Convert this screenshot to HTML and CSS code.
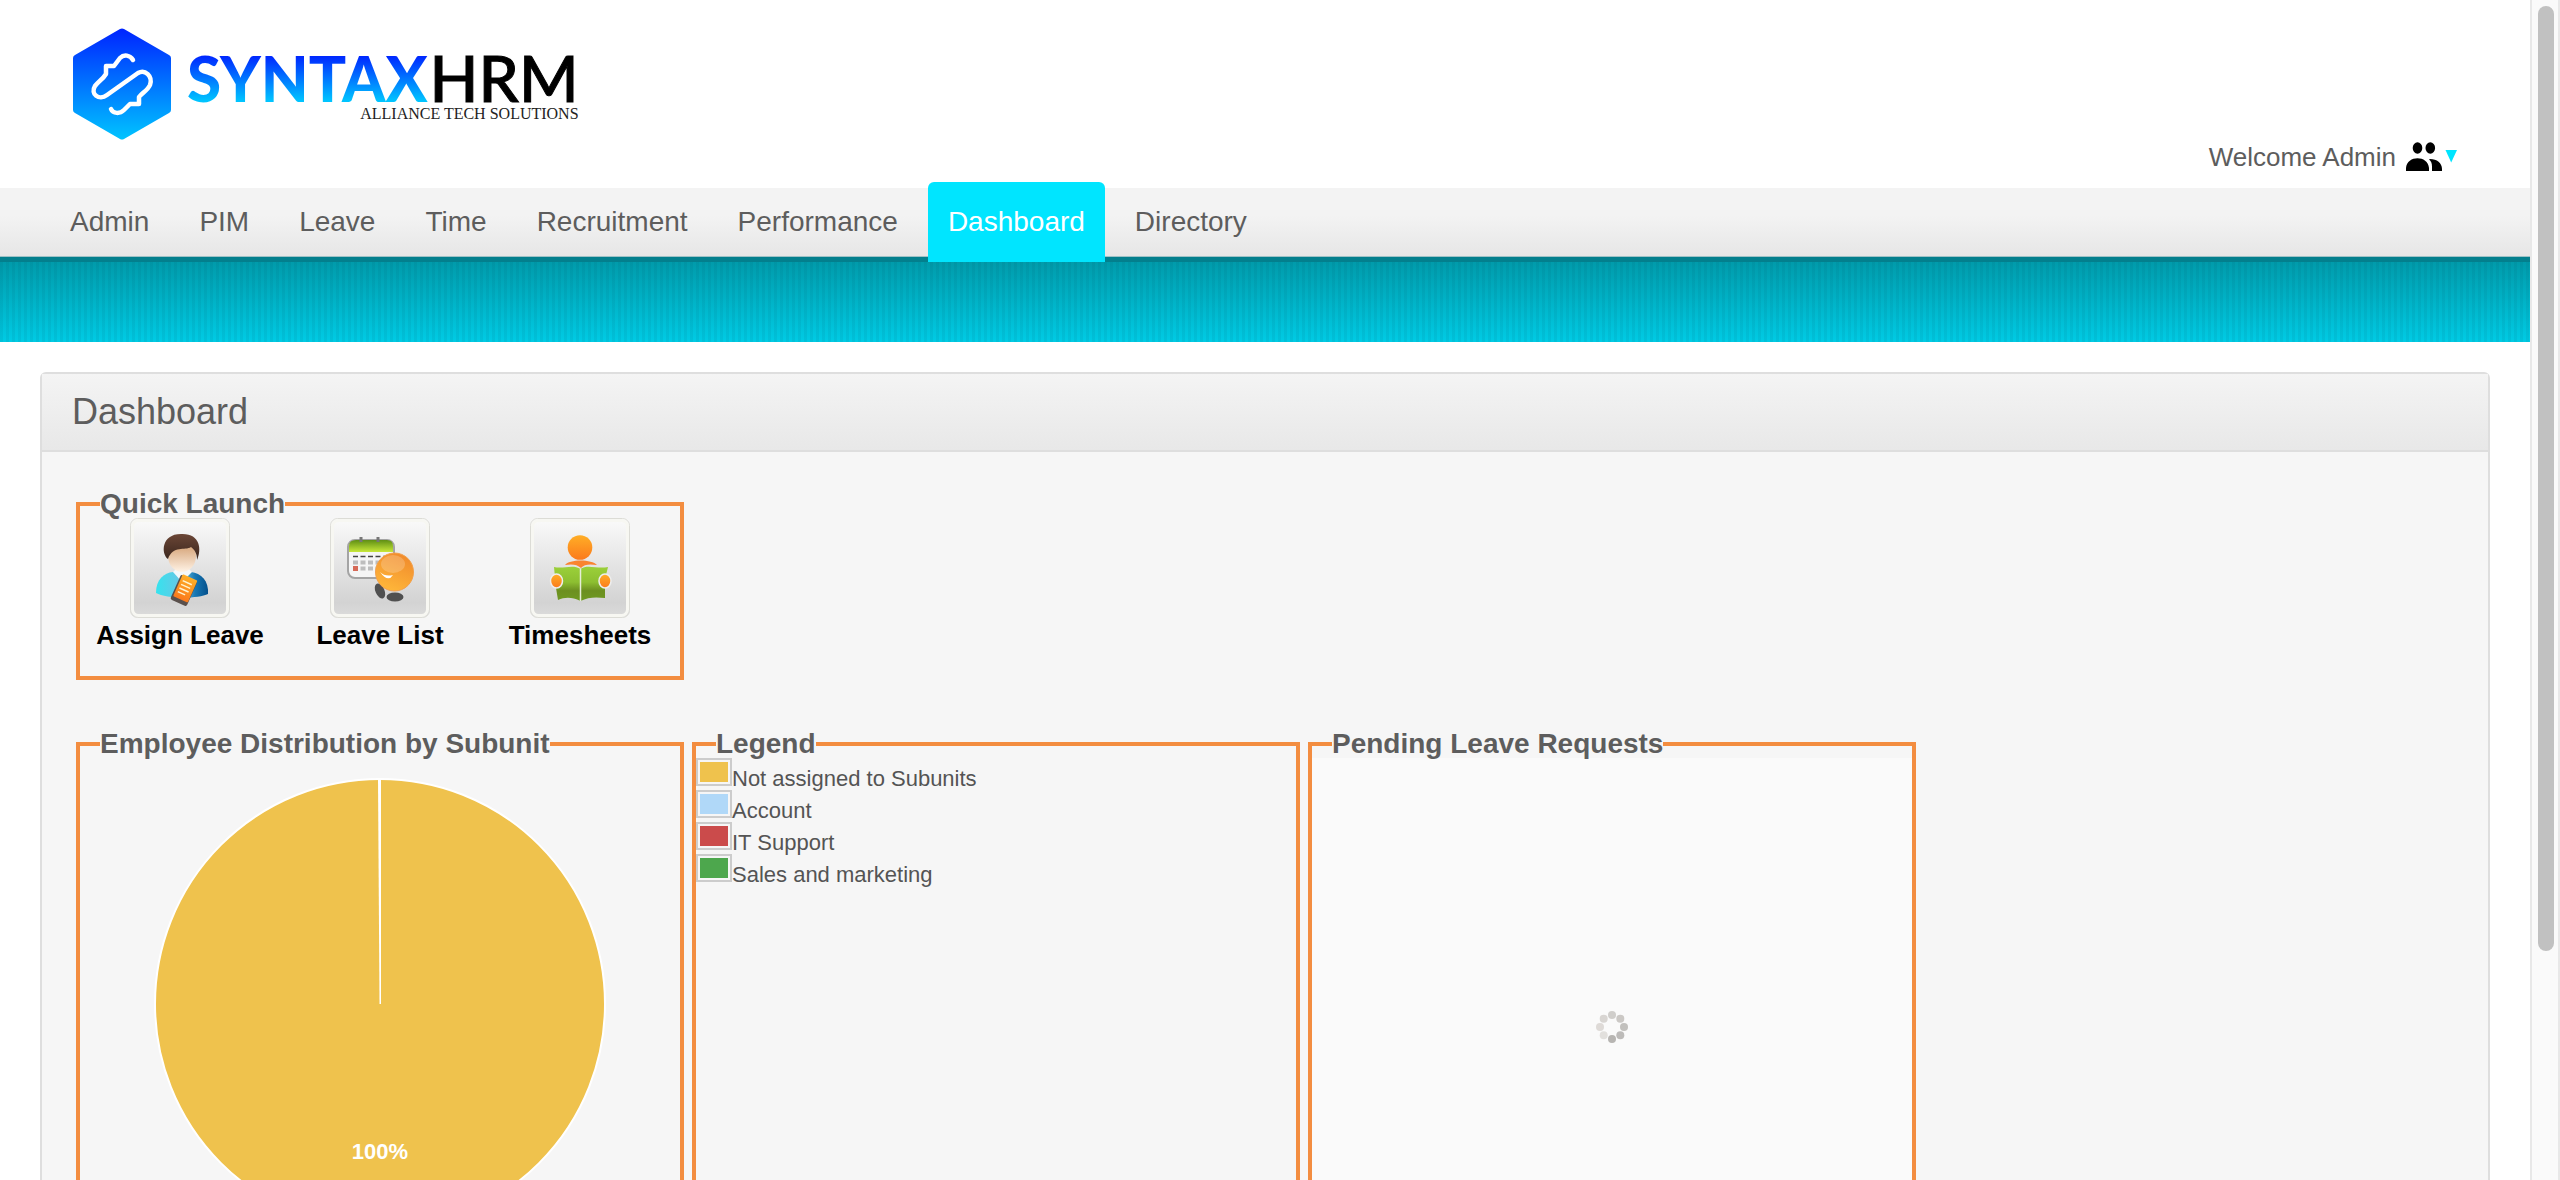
FILE: index.html
```html
<!DOCTYPE html>
<html lang="en">
<head>
<meta charset="utf-8">
<title>Dashboard - SyntaxHRM</title>
<meta name="viewport" content="width=device-width, initial-scale=1">
<link rel="stylesheet" href="styles.css">
</head>
<body>
<div class="page">
  <header class="header">
    <a class="brand" href="#">
      <svg class="brand-mark" viewBox="0 0 98 112" aria-hidden="true">
        <defs><linearGradient id="brandFill" x1="0" y1="0" x2="0" y2="1"><stop offset="0" stop-color="#0024ff"/><stop offset="1" stop-color="#00c4ff"/></linearGradient></defs>
        <path fill="url(#brandFill)" d="M47 1Q49 0 51 1L96 27Q98 28 98 30V82Q98 84 96 85L51 111Q49 112 47 111L2 85Q0 84 0 82V30Q0 28 2 27Z"/>
        <g fill="none" stroke="#fff" stroke-width="4.500" stroke-linecap="round" stroke-linejoin="round">
          <path d="M60 32C57 27 51 26 47 30L41 38H33V46C30 51 26 53 22 58C17 66 26 73 34 67L65 45C72 41 80 48 77 57C75 62 69 65 66 69V76H57L51 82C47 86 40 86 38 81"/>
        </g>
      </svg>
      <span class="brand-text">
        <span class="brand-name"><span class="brand-syntax">SYNTAX</span><span class="brand-hrm">HRM</span></span>
        <span class="brand-tagline">ALLIANCE TECH SOLUTIONS</span>
      </span>
    </a>
    <a class="user" href="#">
      <span>Welcome Admin</span>
      <svg class="user-icon" viewBox="0 0 52 30" aria-hidden="true">
        <ellipse cx="11.500" cy="6" rx="4.800" ry="5.800"/><ellipse cx="24.300" cy="6" rx="4.800" ry="5.800"/>
        <path d="M0 29V26C1 13 22 13 23 26V29ZM24 17C31 17 36 21 36 27V29H26V25C26 21 25 19 23 17.500Z"/>
        <path fill="#00e5ff" d="M39.500 8H51L45.200 20.500Z"/>
      </svg>
    </a>
  </header>

  <nav class="menu" aria-label="Main">
    <a class="menu-item" href="#">Admin</a>
    <a class="menu-item" href="#">PIM</a>
    <a class="menu-item" href="#">Leave</a>
    <a class="menu-item" href="#">Time</a>
    <a class="menu-item" href="#">Recruitment</a>
    <a class="menu-item" href="#">Performance</a>
    <a class="menu-item menu-item-current" href="#" aria-current="page">Dashboard</a>
    <a class="menu-item" href="#">Directory</a>
  </nav>
  <div class="ribbon"></div>

  <main class="box">
    <h1 class="box-title">Dashboard</h1>
    <div class="box-body">
      <fieldset class="panel panel-launch">
        <legend>Quick Launch</legend>
        <div class="launch-list">
          <a class="launch" href="#">
            <svg class="launch-icon" viewBox="0 0 100 100" aria-hidden="true">
              <defs>
                <linearGradient id="tile" x1="0" y1="0" x2="0" y2="1"><stop offset="0" stop-color="#fafafa"/><stop offset="0.850" stop-color="#d3d3d3"/><stop offset="1" stop-color="#dcdcdc"/></linearGradient>
                <linearGradient id="hair" x1="0" y1="0" x2="0" y2="1"><stop offset="0" stop-color="#6b4636"/><stop offset="1" stop-color="#3a261d"/></linearGradient>
                <linearGradient id="skin" x1="0" y1="0" x2="0" y2="1"><stop offset="0.300" stop-color="#dcb089"/><stop offset="1" stop-color="#fff3e6"/></linearGradient>
                <linearGradient id="shirt"><stop offset="0" stop-color="#35e3ee"/><stop offset="0.500" stop-color="#6cc4e4"/><stop offset="0.750" stop-color="#1878b4"/><stop offset="1" stop-color="#04508c"/></linearGradient>
                <linearGradient id="orange" x1="0" y1="0" x2="0" y2="1"><stop offset="0" stop-color="#ffae26"/><stop offset="1" stop-color="#fb7a1c"/></linearGradient>
                <linearGradient id="ball" x1="0.700" y1="0" x2="0.300" y2="1"><stop offset="0" stop-color="#f08a2c"/><stop offset="1" stop-color="#ffb83a"/></linearGradient>
                <linearGradient id="green" x1="0" y1="0" x2="0" y2="1"><stop offset="0" stop-color="#9bd03a"/><stop offset="0.450" stop-color="#8dbf31"/><stop offset="0.700" stop-color="#6c8f20"/><stop offset="1" stop-color="#6f9a22"/></linearGradient>
                <linearGradient id="calTop" x1="0" y1="0" x2="0" y2="1"><stop offset="0" stop-color="#5f8f14"/><stop offset="1" stop-color="#c8e83a"/></linearGradient>
              </defs>
              <rect x="0.500" y="0.500" width="99" height="99" rx="7" fill="url(#tile)" stroke="#dcdcd6" stroke-width="1"/>
              <rect x="2.500" y="2.500" width="95" height="95" rx="6" fill="none" stroke="#f7f7f2" stroke-width="3"/>
              <path fill="url(#shirt)" d="M26 75C26 61 34 55 43 54H61C71 55 79 63 78 76C68 81 36 81 26 75Z"/>
              <path fill="#f4f8fa" d="M43 54L52 64L62 54L58 50H47Z"/>
              <ellipse cx="52" cy="38" rx="14" ry="16" fill="url(#skin)"/>
              <path fill="url(#hair)" d="M38 41C31 36 31 16 51 16C70 15 72 31 67 42C67 36 65 32 61 29C55 33 43 27 38 41Z"/>
              <g transform="rotate(24 54 72)"><rect x="45" y="59" width="18" height="27" rx="2" fill="#5a504c"/><rect x="46.500" y="58" width="16" height="24" rx="1" fill="url(#orange)"/><path stroke="#fff3d0" stroke-width="1.500" d="M49 64H59M49 68H59M49 72H59M49 76H57"/></g>
            </svg>
            <span>Assign Leave</span>
          </a>
          <a class="launch" href="#">
            <svg class="launch-icon" viewBox="0 0 100 100" aria-hidden="true">
              <rect x="0.500" y="0.500" width="99" height="99" rx="7" fill="url(#tile)" stroke="#dcdcd6" stroke-width="1"/>
              <rect x="2.500" y="2.500" width="95" height="95" rx="6" fill="none" stroke="#f7f7f2" stroke-width="3"/>
              <rect x="18" y="22" width="46" height="38" rx="7" fill="#f5f5f5" stroke="#a4a4a4" stroke-width="2"/>
              <path fill="url(#calTop)" d="M19 34V28Q19 22 26 22H57Q63 22 63 28V34Z"/>
              <path stroke="#777" stroke-width="3" d="M31 19V24M48 19V24"/>
              <path stroke="#444" stroke-width="1.500" stroke-dasharray="5 2.500" d="M23 38.500H60"/>
              <path stroke="#bdbdbd" stroke-width="4" stroke-dasharray="5 2.500" d="M23 44.500H60M23 50.500H56"/>
              <rect x="23" y="48" width="5" height="5" fill="#d66a58"/>
              <ellipse cx="50" cy="73" rx="4.500" ry="8" fill="#505050" transform="rotate(-24 50 73)"/>
              <ellipse cx="65" cy="79" rx="8.500" ry="4.500" fill="#505050"/>
              <circle cx="64.500" cy="54" r="19" fill="url(#ball)" stroke="#f3a04a" stroke-width="1"/>
              <ellipse cx="63" cy="46" rx="12" ry="9" fill="#fff" opacity="0.200"/>
              <path fill="#fff" d="M50 54Q55 59 63 57Q58 65 50 54Z"/>
            </svg>
            <span>Leave List</span>
          </a>
          <a class="launch" href="#">
            <svg class="launch-icon" viewBox="0 0 100 100" aria-hidden="true">
              <rect x="0.500" y="0.500" width="99" height="99" rx="7" fill="url(#tile)" stroke="#dcdcd6" stroke-width="1"/>
              <rect x="2.500" y="2.500" width="95" height="95" rx="6" fill="none" stroke="#f7f7f2" stroke-width="3"/>
              <circle cx="50" cy="29.500" r="12.300" fill="url(#orange)"/>
              <path fill="#f98430" d="M35 47C39 41 62 41 67 47C60 46 54 46 51 50C47 46 41 46 35 47Z"/>
              <path fill="url(#green)" d="M24 49C34 51 43 46 50.500 51C57 46 67 51 78 49L75 61V80C66 79 58 79 50.500 83C42 79 35 79 28 82L26 70Z"/>
              <path stroke="#e6edd8" stroke-width="1.500" d="M50.500 51V83"/>
              <ellipse cx="26.500" cy="63" rx="6" ry="7" fill="url(#orange)" stroke="#eee" stroke-width="1.500"/>
              <ellipse cx="75" cy="63" rx="6" ry="7" fill="url(#orange)" stroke="#eee" stroke-width="1.500"/>
            </svg>
            <span>Timesheets</span>
          </a>
        </div>
      </fieldset>

      <div class="panel-row">
        <fieldset class="panel panel-tall">
          <legend>Employee Distribution by Subunit</legend>
          <div class="chart">
            <svg class="pie" viewBox="0 0 452 452" role="img" aria-label="Not assigned to Subunits 100%">
              <circle cx="226" cy="226" r="225" fill="#efc24d" stroke="#fff" stroke-width="2"/>
              <path fill="#fff" d="M224 1H227L227 226H225.500Z"/>
              <text class="pie-label" x="226" y="381" text-anchor="middle">100%</text>
            </svg>
          </div>
        </fieldset>
        <fieldset class="panel panel-tall">
          <legend>Legend</legend>
          <ul class="key">
            <li><span class="swatch"><span class="swatch-fill fill-yellow"></span></span>Not assigned to Subunits</li>
            <li><span class="swatch"><span class="swatch-fill fill-blue"></span></span>Account</li>
            <li><span class="swatch"><span class="swatch-fill fill-red"></span></span>IT Support</li>
            <li><span class="swatch"><span class="swatch-fill fill-green"></span></span>Sales and marketing</li>
          </ul>
        </fieldset>
        <fieldset class="panel panel-tall">
          <legend>Pending Leave Requests</legend>
          <div class="loading">
            <svg class="spinner" viewBox="0 0 32 32" role="img" aria-label="Loading">
              <circle cx="16" cy="4" r="4" fill="#d0cecb"/><circle cx="24.300" cy="7.700" r="4" fill="#cbc8c5"/><circle cx="28" cy="16" r="4" fill="#c2c0bd"/><circle cx="24.300" cy="24.300" r="4" fill="#bdbbb9"/><circle cx="16" cy="28" r="4" fill="#b7b5b2"/><circle cx="7.700" cy="24.300" r="4" fill="#e2e0dd"/><circle cx="4" cy="16" r="4" fill="#dedad7"/><circle cx="7.700" cy="7.700" r="4" fill="#d8d5d2"/>
            </svg>
          </div>
        </fieldset>
      </div>
    </div>
  </main>
</div>
<div class="scrollbar" aria-hidden="true"><div class="scrollbar-thumb"></div></div>
</body>
</html>
```
FILE: styles.css
```css
* {
  box-sizing: border-box;
}

body {
  display: flex;
  height: 100vh;
  margin: 0;
  overflow: hidden;
  background: #fff;
  color: #5d5d5d;
  font-family: "Liberation Sans", Arial, sans-serif;
}

a {
  color: inherit;
  text-decoration: none;
}

.page {
  flex: 1;
  min-width: 0;
}

/* Header */
.header {
  display: flex;
  align-items: flex-start;
  justify-content: space-between;
  height: 188px;
  padding: 28px 72px 0 73px;
}

.brand {
  display: flex;
  gap: 16px;
}

.brand-mark {
  width: 98px;
  height: 112px;
}

.brand-text {
  display: flex;
  flex-direction: column;
  padding-top: 12px;
}

.brand-name {
  display: flex;
  align-items: baseline;
  gap: 2px;
  font: 400 64px/76px Lato, sans-serif;
}

.brand-syntax {
  background: linear-gradient(#0024ff 20%, #00c4ff 80%);
  background-clip: text;
  color: transparent;
  font-size: 62px;
  font-weight: 900;
}

.brand-hrm {
  color: #000;
  font-weight: 500;
  -webkit-text-stroke: 1px #000;
}

.brand-tagline {
  margin-top: -12px;
  color: #222;
  font: 400 16px/20px "Liberation Serif", serif;
  text-align: right;
}

.user {
  display: flex;
  gap: 10px;
  padding-top: 114px;
  font-size: 26px;
  line-height: 30px;
}

.user-icon {
  width: 52px;
  height: 30px;
  fill: #000;
}

/* Main menu */
.menu {
  display: flex;
  align-items: flex-end;
  gap: 10px;
  height: 74px;
  padding-left: 50px;
  border-bottom: 5px solid #037f8d;
  background: linear-gradient(#f3f3f3 40%, #e6e6e6);
  box-shadow: inset 0 -1px #9fc2c6;
}

.menu-item {
  height: 80px;
  margin-bottom: -5px;
  padding: 0 20px;
  border-radius: 6px 6px 0 0;
  font-size: 28px;
  line-height: 80px;
}

.menu-item-current {
  background: #00e5ff;
  color: #fff;
}

.ribbon {
  height: 80px;
  background:
    repeating-linear-gradient(90deg, rgba(0, 60, 80, 0.070) 0 3px, transparent 3px 6px),
    linear-gradient(#009bab, #00cbe4);
}

/* Content box */
.box {
  margin: 30px 40px;
  border: 2px solid #dedede;
  border-radius: 6px;
  background: #f6f6f6;
}

.box-title {
  margin: 0;
  padding: 0 30px;
  border-bottom: 2px solid #dedede;
  background: linear-gradient(#f4f4f4, #e8e8e8);
  font-size: 36px;
  font-weight: 400;
  line-height: 76px;
}

.box-body {
  display: flex;
  flex-direction: column;
  gap: 50px;
  padding: 38px 34px;
}

.panel {
  width: 608px;
  min-width: 0;
  margin: 0;
  padding: 0;
  border: 4px solid #f38d40;
}

.panel legend {
  margin-left: 20px;
  padding: 0;
  font-size: 28px;
  font-weight: 700;
  line-height: 28px;
}

.panel-launch {
  height: 190px;
}

.panel-row {
  display: flex;
  gap: 8px;
}

.panel-tall {
  height: 570px;
}

.launch-list {
  display: flex;
}

.launch {
  display: flex;
  flex: 1;
  flex-direction: column;
  align-items: center;
  color: #000;
  font-size: 26px;
  font-weight: 700;
  line-height: 34px;
}

.launch-icon {
  width: 100px;
  height: 100px;
}

.chart {
  display: flex;
  justify-content: center;
  padding-top: 20px;
}

.pie {
  width: 452px;
  height: 452px;
}

.pie-label {
  fill: #fff;
  font-size: 22px;
  font-weight: 700;
}

.key {
  display: flex;
  flex-direction: column;
  gap: 4px;
  margin: 0;
  padding: 0;
  color: #545454;
  font-size: 22px;
  list-style: none;
}

.key li {
  display: flex;
  align-items: flex-end;
  height: 28px;
  line-height: 14px;
}

.swatch {
  width: 36px;
  height: 28px;
  padding: 2px;
  border: 2px solid #ccc;
}

.swatch-fill {
  display: block;
  height: 20px;
}

.fill-yellow { background: #efc24d; }
.fill-blue { background: #b0d8f8; }
.fill-red { background: #cb4b4b; }
.fill-green { background: #4da74d; }

.loading {
  display: flex;
  align-items: center;
  justify-content: center;
  height: 538px;
  background: #fafafa;
}

.spinner {
  width: 32px;
  height: 32px;
}

/* Scroll track */
.scrollbar {
  width: 30px;
  padding: 6px 4px 0 6px;
  border: solid #e8e8e8;
  border-width: 0 2px;
  background: #fafafa;
}

.scrollbar-thumb {
  width: 16px;
  height: 80.5%;
  border-radius: 8px;
  background: #c1c1c1;
}
```
